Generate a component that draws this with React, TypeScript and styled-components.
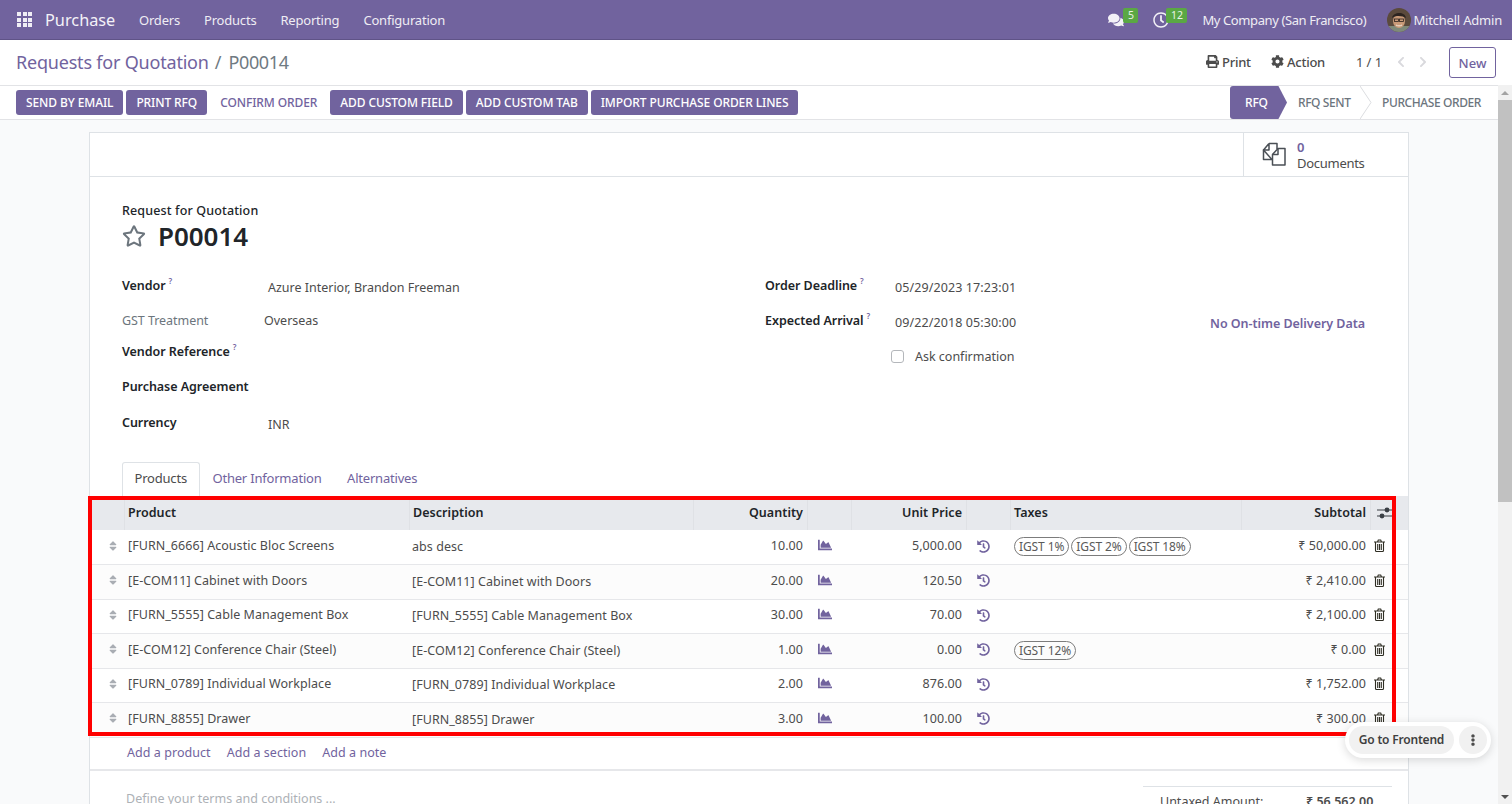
import * as React from 'react';
import styled, { createGlobalStyle } from 'styled-components';
import {
  FaChartArea,
  FaChevronLeft,
  FaChevronRight,
  FaCog,
  FaComments,
  FaEllipsisV,
  FaHistory,
  FaPrint,
  FaRegClock,
  FaRegStar,
  FaSort,
} from 'react-icons/fa';

const Global = createGlobalStyle`
  html, body {
    margin: 0;
    padding: 0;
    height: 100%;
    overflow: hidden;
  }
  body {
    font-family: "Noto Sans", "Open Sans", sans-serif;
    font-size: 13px;
    color: #4c4c4c;
  }
  * {
    box-sizing: border-box;
  }
`

const Page = styled.div`
  position: relative;
  width: 1512px;
  height: 804px;
  overflow: hidden;
  display: flex;
  flex-direction: column;
  background: #fff;
`

const NavBar = styled.header`
  height: 40px;
  flex: none;
  display: flex;
  align-items: center;
  padding: 0 10px 0 17px;
  background: #71639e;
  border-bottom: 1px solid #5f5387;
  color: #fff;
`

const AppGrid = styled.div`
  display: grid;
  grid-template-columns: repeat(3, 4px);
  grid-auto-rows: 4px;
  gap: 1.5px;
  margin-right: 13px;
`

const AppDot = styled.span`
  background: #f0eef5;
`

const Brand = styled.span`
  font-size: 16.3px;
  width: 94px;
  color: #f4f2f8;
`

const NavMenu = styled.nav`
  display: flex;
  gap: 24px;
`

const NavLink = styled.span`
  font-size: 13px;
  letter-spacing: -0.2px;
  color: #efedf4;
`

const NavRight = styled.div`
  margin-left: auto;
  display: flex;
  align-items: center;
`

const Systray = styled.span<{ $w: number }>`
  position: relative;
  width: ${p => p.$w}px;
  height: 24px;
  display: flex;
  align-items: center;
  font-size: 16px;
  color: #f3f1f7;
`

const Badge = styled.span<{ $left: number; $w: number }>`
  position: absolute;
  left: ${p => p.$left}px;
  top: 0;
  width: ${p => p.$w}px;
  height: 15px;
  border-radius: 2px;
  background: #5aa844;
  color: #eaf3e6;
  font-size: 10.5px;
  line-height: 14px;
  text-align: center;
`

const Company = styled.span`
  width: 185px;
  font-size: 13px;
  letter-spacing: -0.4px;
  color: #efedf4;
`

const UserName = styled.span`
  margin-left: 2px;
  font-size: 13px;
  letter-spacing: -0.2px;
  color: #efedf4;
`

const TopPanel = styled.div`
  height: 45px;
  flex: none;
  display: flex;
  align-items: center;
  padding: 0 16px;
  background: #fff;
`

const Crumb = styled.span`
  margin-bottom: 2px;
  font-size: 18px;
  letter-spacing: -0.2px;
  color: #71639e;
`

const CrumbCurrent = styled.span`
  margin: 0 0 2px 6px;
  font-size: 18px;
  letter-spacing: -0.35px;
  word-spacing: 3px;
  color: #6f7a82;
`

const TopRight = styled.div`
  margin-left: auto;
  display: flex;
  align-items: center;
`

const ActionLink = styled.span<{ $w: number }>`
  width: ${p => p.$w}px;
  margin-bottom: 2px;
  display: flex;
  align-items: center;
  gap: 3px;
  font-size: 13px;
  font-weight: 500;
  letter-spacing: -0.25px;
  color: #4c4c4c;
`

const Pager = styled.span`
  width: 39px;
  margin-bottom: 2px;
  font-size: 13px;
  letter-spacing: -0.1px;
  color: #4c4c4c;
`

const PagerArrow = styled.span`
  width: 22px;
  margin-bottom: 2px;
  display: flex;
  font-size: 12px;
  color: #d9d9dd;
`

const NewButton = styled.button`
  width: 47px;
  height: 31px;
  margin-left: 10px;
  padding: 0;
  background: #fff;
  border: 1px solid #71639e;
  border-radius: 3px;
  font: 500 13px "Noto Sans", sans-serif;
  color: #71639e;
`

const Body = styled.div`
  flex: 1;
  min-height: 0;
  display: flex;
`

const Main = styled.main`
  flex: 1;
  min-width: 0;
  display: flex;
  flex-direction: column;
  background: #f9fafb;
`

const StatusRow = styled.div`
  height: 35px;
  flex: none;
  display: flex;
  align-items: center;
  padding-left: 16px;
  background: #fff;
  border-top: 1px solid #e2e3e6;
  border-bottom: 1px solid #e2e3e6;
`

const ActionButton = styled.button<{ $plain?: boolean }>`
  height: 25px;
  margin-right: 3px;
  padding: 0 10px;
  border: 0;
  border-radius: 3px;
  background: ${p => (p.$plain ? '#fff' : '#71639e')};
  color: ${p => (p.$plain ? '#71639e' : '#fff')};
  font: 500 12px "Noto Sans", sans-serif;
  letter-spacing: -0.1px;
  white-space: nowrap;
`

const Stages = styled.div`
  margin-left: auto;
  height: 100%;
  display: flex;
  align-items: center;
`

const ActiveStage = styled.span`
  width: 57px;
  height: 100%;
  display: flex;
  align-items: center;
  padding-left: 15px;
  background: #71639e;
  color: #fff;
  font-size: 12px;
  font-weight: 500;
  letter-spacing: -0.2px;
  border-radius: 3px 0 0 3px;
  clip-path: polygon(0 0, 85% 0, 100% 50%, 85% 100%, 0 100%);
`

const Stage = styled.span<{ $w: number; $pad: number }>`
  width: ${p => p.$w}px;
  padding-left: ${p => p.$pad}px;
  font-size: 12px;
  font-weight: 500;
  letter-spacing: -0.4px;
  color: #6c757d;
  white-space: nowrap;
`

const StageArrow = styled.svg`
  width: 12px;
  height: 33px;
  flex: none;
`

const Sheet = styled.section`
  width: 1320px;
  margin: 12px 0 0 89px;
  flex: none;
  background: #fff;
  border: 1px solid #dee2e6;
  border-bottom: 0;
`

const ButtonBox = styled.div`
  height: 44px;
  display: flex;
  justify-content: flex-end;
  border-bottom: 1px solid #dee2e6;
`

const StatButton = styled.div`
  width: 165px;
  display: flex;
  align-items: center;
  padding-left: 18px;
  border-left: 1px solid #dee2e6;
`

const StatIcon = styled.svg`
  width: 24px;
  height: 24px;
  margin: -1px 11px 0 0;
`

const StatText = styled.div`
  display: flex;
  flex-direction: column;
  font-size: 13px;
  line-height: 16px;
  letter-spacing: -0.28px;
`

const StatValue = styled.span`
  font-weight: 600;
  color: #71639e;
`

const SheetBody = styled.div`
  padding: 25px 0 0 32px;
`

const Overline = styled.div`
  font-size: 12.5px;
  font-weight: 500;
  letter-spacing: 0.14px;
  line-height: 18px;
  color: #212529;
`

const TitleRow = styled.div`
  display: flex;
  align-items: center;
  height: 30px;
  margin-top: 1px;
`

const StarIcon = styled(FaRegStar)`
  width: 24px;
  height: 24px;
  color: #6c757d;
  margin-right: 12px;
`

const Title = styled.h1`
  margin: 0;
  font-size: 26px;
  font-weight: 600;
  line-height: 30px;
  letter-spacing: -0.05px;
  color: #212529;
`

const Columns = styled.div`
  display: flex;
  margin-top: 17px;
  height: 194px;
`

const LeftGroup = styled.div`
  width: 643px;
  flex: none;
`

const RightGroup = styled.div`
  flex: 1;
  padding-right: 43px;
`

const FieldRow = styled.div<{ $h: number }>`
  height: ${p => p.$h}px;
  display: flex;
  align-items: center;
`

const FieldLabel = styled.label<{ $w: number; $muted?: boolean }>`
  width: ${p => p.$w}px;
  flex: none;
  font-size: 12.5px;
  font-weight: ${p => (p.$muted ? 400 : 600)};
  letter-spacing: -0.05px;
  color: ${p => (p.$muted ? '#6c757d' : '#212529')};
`

const Help = styled.sup`
  margin-left: 3px;
  font-size: 8px;
  font-weight: 600;
  color: #71639e;
  position: relative;
  top: -1px;
  line-height: 0;
`

const FieldValue = styled.span<{ $flush?: boolean }>`
  padding-top: ${p => (p.$flush ? 0 : 3)}px;
  font-size: 12.5px;
  letter-spacing: -0.01px;
  color: #4c4c4c;
`

const DateValue = styled(FieldValue)`
  letter-spacing: 0.1px;
`

const DeliveryNote = styled.span`
  margin-left: auto;
  padding-top: 5px;
  font-size: 12.5px;
  font-weight: 600;
  letter-spacing: -0.04px;
  color: #71639e;
`

const CheckBox = styled.span`
  width: 13px;
  height: 13px;
  margin: 3px 11px 0 126px;
  background: #fff;
  border: 1px solid #b4b7bb;
  border-radius: 3px;
`

const Tabs = styled.div`
  display: flex;
  height: 34px;
  align-items: flex-end;
`

const Tab = styled.span<{ $active?: boolean }>`
  height: ${p => (p.$active ? 35 : 34)}px;
  display: flex;
  align-items: center;
  padding: 0 12px ${p => (p.$active ? 5 : 3)}px 11.5px;
  margin-bottom: ${p => (p.$active ? -1 : 0)}px;
  font-size: 13px;
  letter-spacing: -0.2px;
  color: ${p => (p.$active ? '#4c4c4c' : '#71639e')};
  background: #fff;
  border: 1px solid ${p => (p.$active ? '#dee2e6' : 'transparent')};
  border-bottom: 0;
  border-radius: 3px 3px 0 0;
`

const Table = styled.table`
  width: 1318px;
  table-layout: fixed;
  border-collapse: collapse;
  font-size: 12.5px;
`

const Col = styled.col<{ $w: number }>`
  width: ${p => p.$w}px;
`

const HeadRow = styled.tr`
  height: 34px;
  background: #e7e9ed;
`

const HeadCell = styled.th<{ $right?: boolean; $first?: boolean }>`
  padding: 0 4px 2px;
  text-align: ${p => (p.$right ? 'right' : 'left')};
  font-weight: 600;
  font-size: 12.5px;
  letter-spacing: 0.05px;
  color: #212529;
  box-shadow: ${p => (p.$first ? 'none' : 'inset 1px 0 0 #dfe1e5')};
`

const BodyRow = styled.tr`
  height: 34.5px;
  border-bottom: 1px solid #e6e7ea;
  background: #fff;
  &:nth-child(even) {
    background: #fcfcfc;
  }
`

const Cell = styled.td<{ $right?: boolean }>`
  padding: 0 4px 3px;
  text-align: ${p => (p.$right ? 'right' : 'left')};
  white-space: nowrap;
  overflow: hidden;
  letter-spacing: 0.05px;
  color: #4c4c4c;
`

const TaxCell = styled(Cell)`
  padding: 0 4px 1px;
`

const DescCell = styled(Cell)`
  padding: 0 4px 1px 3px;
`

const DragCell = styled.td`
  padding-left: 17px;
  font-size: 12px;
  color: #a9adb3;
`

const IconCell = styled.td<{ $pad: number; $top?: number; $size: number }>`
  padding-left: ${p => p.$pad}px;
  padding-top: ${p => p.$top || 0}px;
  font-size: ${p => p.$size}px;
  color: #71639e;
`

const TrashCell = styled.td`
  padding: 0 0 3px 4px;
`

const TrashIcon = styled.svg`
  display: block;
  width: 11px;
  height: 13px;
  fill: none;
  stroke: #2f2e24;
  stroke-width: 1.1;
`

const SliderIcon = styled.svg`
  display: block;
  width: 15px;
  height: 12px;
  margin: 2px 0 0 3px;
`

const TaxTag = styled.span`
  display: inline-block;
  height: 19px;
  margin-right: 2px;
  padding: 0 4px;
  border: 1px solid #7c7c7c;
  border-radius: 10px;
  font-size: 12px;
  line-height: 17px;
  letter-spacing: -0.1px;
  color: #5a5a5a;
`

const AddRow = styled.div`
  height: 33px;
  display: flex;
  align-items: center;
  gap: 16px;
  padding: 0 0 1px 37px;
  border-bottom: 2px solid #e6e7ea;
`

const AddLink = styled.span`
  font-size: 12.5px;
  letter-spacing: 0.05px;
  color: #71639e;
`

const Footer = styled.div`
  display: flex;
  justify-content: space-between;
  padding: 15px 16px 0 36px;
`

const Terms = styled.span`
  padding-top: 4px;
  font-size: 12.5px;
  color: #adb1b6;
`

const Totals = styled.div`
  width: 249px;
  display: flex;
  padding: 6px 0 0 17px;
  border-top: 1px solid #dee2e6;
  font-size: 12.5px;
  color: #4c4c4c;
`

const TotalLabel = styled.span`
  width: 146px;
`

const TotalValue = styled.span`
  font-weight: 600;
`

const ScrollTrack = styled.div`
  width: 14px;
  flex: none;
  display: flex;
  flex-direction: column;
  align-items: center;
  background: #f1f1f1;
`

const ScrollArrow = styled.span<{ $down?: boolean }>`
  flex: none;
  height: 15px;
  width: 14px;
  display: flex;
  align-items: center;
  justify-content: center;
  margin-top: ${p => (p.$down ? 'auto' : 0)};
  &::before {
    content: '';
    border-left: 4px solid transparent;
    border-right: 4px solid transparent;
    border-bottom: ${p => (p.$down ? '0' : '4px solid #a3a3a3')};
    border-top: ${p => (p.$down ? '4px solid #505050' : '0')};
  }
`

const ScrollThumb = styled.span`
  width: 100%;
  height: 402px;
  background: #c1c1c1;
`

const Annotation = styled.div`
  position: absolute;
  left: 88px;
  top: 496px;
  width: 1308px;
  height: 240px;
  border: 4px solid #ff0000;
  pointer-events: none;
`

const FrontendPill = styled.div`
  position: absolute;
  left: 1345px;
  top: 722px;
  height: 36px;
  display: flex;
  align-items: center;
  gap: 5px;
  padding: 4px;
  background: #fff;
  border-radius: 18px;
  box-shadow: 0 2px 10px rgba(0, 0, 0, 0.15);
`

const FrontendLink = styled.span`
  height: 28px;
  width: 105px;
  padding-bottom: 2px;
  display: flex;
  align-items: center;
  justify-content: center;
  border-radius: 14px;
  background: #f1f1f1;
  font-size: 12px;
  font-weight: 600;
  letter-spacing: -0.2px;
  color: #3f3f3f;
`

const MoreButton = styled.span`
  width: 28px;
  height: 28px;
  display: flex;
  align-items: center;
  justify-content: center;
  border-radius: 50%;
  background: #f1f1f1;
  font-size: 12px;
  color: #4c4c4c;
`

const Avatar = () => (
  <svg width="24" height="24" viewBox="0 0 24 24">
    <defs>
      <clipPath id="av">
        <circle cx="12" cy="12" r="12" />
      </clipPath>
    </defs>
    <g clipPath="url(#av)">
      <rect width="24" height="24" fill="#5b4a3c" />
      <rect x="0" y="18" width="24" height="6" fill="#7f8a7a" />
      <ellipse cx="12" cy="13" rx="6" ry="7" fill="#c99a78" />
      <path d="M5 10c1-6 13-7 14 0-3-2-10-3-14 0z" fill="#2c2420" />
      <rect x="7.5" y="11" width="4" height="2.5" fill="none" stroke="#2c2420" strokeWidth=".8" />
      <rect x="12.5" y="11" width="4" height="2.5" fill="none" stroke="#2c2420" strokeWidth=".8" />
      <path d="M9 17c2 1.2 4 1.2 6 0" stroke="#f3e6da" strokeWidth="1" fill="none" />
    </g>
  </svg>
)

const menu = ['Orders', 'Products', 'Reporting', 'Configuration']
const buttons = ['SEND BY EMAIL', 'PRINT RFQ', 'CONFIRM ORDER', 'ADD CUSTOM FIELD', 'ADD CUSTOM TAB', 'IMPORT PURCHASE ORDER LINES']
const columns = [34, 285, 284, 114, 44, 115, 44, 231, 129, 38]

const rows = [
  { product: '[FURN_6666] Acoustic Bloc Screens', desc: 'abs desc', qty: '10.00', price: '5,000.00', taxes: ['IGST 1%', 'IGST 2%', 'IGST 18%'], total: '₹ 50,000.00' },
  { product: '[E-COM11] Cabinet with Doors', desc: '[E-COM11] Cabinet with Doors', qty: '20.00', price: '120.50', taxes: [], total: '₹ 2,410.00' },
  { product: '[FURN_5555] Cable Management Box', desc: '[FURN_5555] Cable Management Box', qty: '30.00', price: '70.00', taxes: [], total: '₹ 2,100.00' },
  { product: '[E-COM12] Conference Chair (Steel)', desc: '[E-COM12] Conference Chair (Steel)', qty: '1.00', price: '0.00', taxes: ['IGST 12%'], total: '₹ 0.00' },
  { product: '[FURN_0789] Individual Workplace', desc: '[FURN_0789] Individual Workplace', qty: '2.00', price: '876.00', taxes: [], total: '₹ 1,752.00' },
  { product: '[FURN_8855] Drawer', desc: '[FURN_8855] Drawer', qty: '3.00', price: '100.00', taxes: [], total: '₹ 300.00' },
]

export default function App() {
  return (
    <Page>
      <Global />
      <NavBar>
        <AppGrid>
          {Array.from({ length: 9 }, (_, i) => <AppDot key={i} />)}
        </AppGrid>
        <Brand>Purchase</Brand>
        <NavMenu>
          {menu.map(m => <NavLink key={m}>{m}</NavLink>)}
        </NavMenu>
        <NavRight>
          <Systray $w={45}>
            <FaComments />
            <Badge $left={15} $w={15}>5</Badge>
          </Systray>
          <Systray $w={49}>
            <FaRegClock />
            <Badge $left={13} $w={21}>12</Badge>
          </Systray>
          <Company>My Company (San Francisco)</Company>
          <Avatar />
          <UserName>Mitchell Admin</UserName>
        </NavRight>
      </NavBar>

      <TopPanel>
        <Crumb>Requests for Quotation</Crumb>
        <CrumbCurrent>/ P00014</CrumbCurrent>
        <TopRight>
          <ActionLink $w={65}><FaPrint />Print</ActionLink>
          <ActionLink $w={85}><FaCog />Action</ActionLink>
          <Pager>1 / 1</Pager>
          <PagerArrow><FaChevronLeft /></PagerArrow>
          <PagerArrow><FaChevronRight /></PagerArrow>
          <NewButton>New</NewButton>
        </TopRight>
      </TopPanel>

      <Body>
        <Main>
          <StatusRow>
            {buttons.map(b => <ActionButton key={b} $plain={b === 'CONFIRM ORDER'}>{b}</ActionButton>)}
            <Stages>
              <ActiveStage>RFQ</ActiveStage>
              <Stage $w={73} $pad={11}>RFQ SENT</Stage>
              <StageArrow viewBox="0 0 12 33">
                <path d="M0 0l11 16.5L0 33" fill="none" stroke="#dcdde0" />
              </StageArrow>
              <Stage $w={126} $pad={10}>PURCHASE ORDER</Stage>
            </Stages>
          </StatusRow>

          <Sheet>
            <ButtonBox>
              <StatButton>
                <StatIcon viewBox="0 0 24 24" fill="none" stroke="#4a4f55" strokeWidth="1.5" strokeLinejoin="round">
                  <path d="M7 1.5h8v5.5M10 17.5H1.5V8z" />
                  <path d="M7 1.5V8H1.5L7 1.5" />
                  <path d="M16 6.5h7V23H10.5V12.5z" fill="#fff" />
                  <path d="M16 6.5v6h-5.5" />
                </StatIcon>
                <StatText>
                  <StatValue>0</StatValue>
                  <span>Documents</span>
                </StatText>
              </StatButton>
            </ButtonBox>

            <SheetBody>
              <Overline>Request for Quotation</Overline>
              <TitleRow>
                <StarIcon />
                <Title>P00014</Title>
              </TitleRow>
              <Columns>
                <LeftGroup>
                  <FieldRow $h={35}>
                    <FieldLabel $w={146}>Vendor<Help>?</Help></FieldLabel>
                    <FieldValue>Azure Interior, Brandon Freeman</FieldValue>
                  </FieldRow>
                  <FieldRow $h={35}>
                    <FieldLabel $w={142} $muted>GST Treatment</FieldLabel>
                    <FieldValue $flush>Overseas</FieldValue>
                  </FieldRow>
                  <FieldRow $h={27}>
                    <FieldLabel $w={146}>Vendor Reference<Help>?</Help></FieldLabel>
                  </FieldRow>
                  <FieldRow $h={43}>
                    <FieldLabel $w={146}>Purchase Agreement</FieldLabel>
                  </FieldRow>
                  <FieldRow $h={29}>
                    <FieldLabel $w={146}>Currency</FieldLabel>
                    <FieldValue>INR</FieldValue>
                  </FieldRow>
                </LeftGroup>
                <RightGroup>
                  <FieldRow $h={35}>
                    <FieldLabel $w={130}>Order Deadline<Help>?</Help></FieldLabel>
                    <DateValue>05/29/2023 17:23:01</DateValue>
                  </FieldRow>
                  <FieldRow $h={35}>
                    <FieldLabel $w={130}>Expected Arrival<Help>?</Help></FieldLabel>
                    <DateValue>09/22/2018 05:30:00</DateValue>
                    <DeliveryNote>No On-time Delivery Data</DeliveryNote>
                  </FieldRow>
                  <FieldRow $h={33}>
                    <CheckBox />
                    <FieldValue>Ask confirmation</FieldValue>
                  </FieldRow>
                </RightGroup>
              </Columns>
              <Tabs>
                <Tab $active>Products</Tab>
                <Tab>Other Information</Tab>
                <Tab>Alternatives</Tab>
              </Tabs>
            </SheetBody>

            <Table>
              <colgroup>
                {columns.map((w, i) => <Col key={i} $w={w} />)}
              </colgroup>
              <thead>
                <HeadRow>
                  <HeadCell $first />
                  <HeadCell>Product</HeadCell>
                  <HeadCell>Description</HeadCell>
                  <HeadCell $right>Quantity</HeadCell>
                  <HeadCell />
                  <HeadCell $right>Unit Price</HeadCell>
                  <HeadCell />
                  <HeadCell>Taxes</HeadCell>
                  <HeadCell $right>Subtotal</HeadCell>
                  <HeadCell>
                    <SliderIcon viewBox="0 0 15 12">
                      <path d="M0 3h15M0 9h15" stroke="#3a3f45" strokeWidth="1" />
                      <circle cx="10" cy="3" r="2.4" fill="#3a3f45" />
                      <circle cx="5" cy="9" r="2.4" fill="#3a3f45" />
                    </SliderIcon>
                  </HeadCell>
                </HeadRow>
              </thead>
              <tbody>
                {rows.map(r => (
                  <BodyRow key={r.product}>
                    <DragCell><FaSort /></DragCell>
                    <Cell>{r.product}</Cell>
                    <DescCell>{r.desc}</DescCell>
                    <Cell $right>{r.qty}</Cell>
                    <IconCell $pad={11} $size={14}><FaChartArea /></IconCell>
                    <Cell $right>{r.price}</Cell>
                    <IconCell $pad={11} $top={2} $size={13}><FaHistory /></IconCell>
                    <TaxCell>{r.taxes.map(t => <TaxTag key={t}>{t}</TaxTag>)}</TaxCell>
                    <Cell $right>{r.total}</Cell>
                    <TrashCell>
                      <TrashIcon viewBox="0 0 11 13">
                        <path d="M0 3h11M3.5 3l.8-2h2.4l.8 2M1.5 3v8.5c0 .6.4 1 1 1h6c.6 0 1-.4 1-1V3" />
                        <path d="M3.7 5v6M5.5 5v6M7.3 5v6" />
                      </TrashIcon>
                    </TrashCell>
                  </BodyRow>
                ))}
              </tbody>
            </Table>

            <AddRow>
              <AddLink>Add a product</AddLink>
              <AddLink>Add a section</AddLink>
              <AddLink>Add a note</AddLink>
            </AddRow>

            <Footer>
              <Terms>Define your terms and conditions ...</Terms>
              <Totals>
                <TotalLabel>Untaxed Amount:</TotalLabel>
                <TotalValue>₹ 56,562.00</TotalValue>
              </Totals>
            </Footer>
          </Sheet>
        </Main>

        <ScrollTrack>
          <ScrollArrow />
          <ScrollThumb />
          <ScrollArrow $down />
        </ScrollTrack>
      </Body>

      <Annotation />
      <FrontendPill>
        <FrontendLink>Go to Frontend</FrontendLink>
        <MoreButton><FaEllipsisV /></MoreButton>
      </FrontendPill>
    </Page>
  )
}
